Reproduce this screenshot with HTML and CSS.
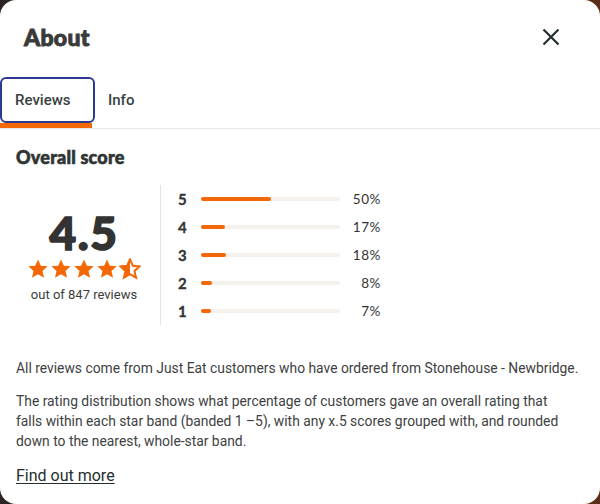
FILE: index.html
```html
<!DOCTYPE html>
<html lang="en">
<head>
<meta charset="utf-8">
<title>About</title>
<link rel="stylesheet" href="styles.css">
</head>
<body>
<div class="modal">
  <header class="header">
    <h1 class="title">About</h1>
    <button class="close" aria-label="Close">
      <svg width="18" height="18" viewBox="0 0 18 18"><path d="M1.5 1.5 L16.5 16.5 M16.5 1.5 L1.5 16.5" stroke="#242e30" stroke-width="2.2" stroke-linecap="butt"/></svg>
    </button>
  </header>
  <nav class="tabs">
    <div class="tab tab-active">Reviews</div>
    <div class="tab tab-info">Info</div>
  </nav>
  <main class="content">
    <h2 class="subtitle">Overall score</h2>
    <section class="score">
      <div class="summary">
        <div class="big">4.5</div>
        <div class="stars">
          <svg class="star" viewBox="0 0 24 24"><path d="M12 1.5l3.1 6.9 7.4.7-5.6 5 1.7 7.4L12 17.6 5.4 21.5l1.7-7.4-5.6-5 7.4-.7z" fill="#f36805"/></svg>
          <svg class="star" viewBox="0 0 24 24"><path d="M12 1.5l3.1 6.9 7.4.7-5.6 5 1.7 7.4L12 17.6 5.4 21.5l1.7-7.4-5.6-5 7.4-.7z" fill="#f36805"/></svg>
          <svg class="star" viewBox="0 0 24 24"><path d="M12 1.5l3.1 6.9 7.4.7-5.6 5 1.7 7.4L12 17.6 5.4 21.5l1.7-7.4-5.6-5 7.4-.7z" fill="#f36805"/></svg>
          <svg class="star" viewBox="0 0 24 24"><path d="M12 1.5l3.1 6.9 7.4.7-5.6 5 1.7 7.4L12 17.6 5.4 21.5l1.7-7.4-5.6-5 7.4-.7z" fill="#f36805"/></svg>
          <svg class="star" viewBox="0 0 24 24"><path d="M12 1.5l3.1 6.9 7.4.7-5.6 5 1.7 7.4L12 17.6 5.4 21.5l1.7-7.4-5.6-5 7.4-.7z" fill="none" stroke="#f36805" stroke-width="2.2" stroke-linejoin="miter"/><path d="M12 1.5 L12 17.6 5.4 21.5l1.7-7.4-5.6-5 7.4-.7z" fill="#f36805"/></svg>
        </div>
        <div class="count">out of 847 reviews</div>
      </div>
      <div class="bars">
        <div class="row"><span class="num">5</span><span class="track"><span class="fill" style="width:50%"></span></span><span class="pct">50%</span></div>
        <div class="row"><span class="num">4</span><span class="track"><span class="fill" style="width:17%"></span></span><span class="pct">17%</span></div>
        <div class="row"><span class="num">3</span><span class="track"><span class="fill" style="width:18%"></span></span><span class="pct">18%</span></div>
        <div class="row"><span class="num">2</span><span class="track"><span class="fill" style="width:8%"></span></span><span class="pct">8%</span></div>
        <div class="row"><span class="num">1</span><span class="track"><span class="fill" style="width:7%"></span></span><span class="pct">7%</span></div>
      </div>
    </section>
    <p class="text first">All reviews come from Just Eat customers who have ordered from Stonehouse - Newbridge.</p>
    <p class="text narrow">The rating distribution shows what percentage of customers gave an overall rating that falls within each star band (banded 1 –5), with any x.5 scores grouped with, and rounded down to the nearest, whole-star band.</p>
    <a class="more" href="#">Find out more</a>
  </main>
</div>
</body>
</html>
```
FILE: styles.css
```css
html, body {
  margin: 0;
  padding: 0;
}
body {
  width: 600px;
  height: 504px;
  background: linear-gradient(90deg, #2a2523 0%, #5a2e18 100%);
  font-family: Roboto, "Liberation Sans", sans-serif;
  color: #242e30;
  overflow: hidden;
}
.modal {
  width: 600px;
  height: 504px;
  background: #fff;
  border-radius: 16px;
  overflow: hidden;
  box-sizing: border-box;
}
.header {
  display: flex;
  align-items: center;
  justify-content: space-between;
  height: 77px;
  padding: 0 40px 4px 24px;
  box-sizing: border-box;
}
.title {
  margin: 0;
  font-family: Lato, sans-serif;
  font-weight: 900;
  font-size: 23px;
  color: #3a3a3a;
  letter-spacing: 0.3px;
  -webkit-text-stroke: 0.9px #3a3a3a;
}
.close {
  background: none;
  border: 0;
  padding: 0;
  width: 18px;
  height: 18px;
  display: flex;
}
.tabs {
  display: flex;
  height: 52px;
  border-bottom: 1px solid #e6e6e6;
  box-sizing: border-box;
}
.tab {
  position: relative;
  font-family: Roboto, sans-serif;
  font-weight: 500;
  font-size: 15px;
  color: #3a3f40;
  line-height: 46px;
  height: 51px;
  box-sizing: border-box;
}
.tab-active {
  width: 95px;
  padding-left: 15px;
}
.tab-active::before {
  content: "";
  position: absolute;
  left: 0;
  top: 0;
  right: 0;
  height: 46px;
  border: 2px solid #2b3990;
  border-radius: 6px;
  box-sizing: border-box;
}
.tab-active::after {
  content: "";
  position: absolute;
  left: 0;
  bottom: 0;
  width: 92px;
  height: 5px;
  background: #f36805;
}
.tab-info {
  padding-left: 13px;
}
.content {
  padding: 17px 16px 0;
}
.subtitle {
  margin: 0;
  font-family: Lato, sans-serif;
  font-weight: 900;
  font-size: 18px;
  line-height: 22px;
  color: #2f3435;
  -webkit-text-stroke: 0.6px #2f3435;
  letter-spacing: 0.2px;
}
.score {
  display: flex;
  align-items: center;
  margin-top: 17px;
}
.summary {
  width: 136px;
  margin-right: 8px;
  display: flex;
  flex-direction: column;
  align-items: center;
  padding-top: 2px;
}
.big {
  font-family: Lato, sans-serif;
  font-weight: 900;
  font-size: 46px;
  line-height: 44px;
  color: #333;
  letter-spacing: 1.5px;
  -webkit-text-stroke: 1.6px #333;
}
.stars {
  display: flex;
  gap: 1px;
  margin-top: 3px;
}
.star {
  width: 22px;
  height: 22px;
}
.count {
  margin-top: 7px;
  font-size: 13px;
  color: #3c3c3c;
}
.bars {
  border-left: 1px solid #e3e3e3;
  padding-left: 17px;
  width: 203px;
}
.row {
  display: flex;
  align-items: center;
  height: 28px;
}
.num {
  width: 23px;
  font-family: Lato, sans-serif;
  font-weight: 700;
  font-size: 15px;
  color: #333;
  -webkit-text-stroke: 0.3px #333;
}
.track {
  width: 139px;
  height: 4px;
  border-radius: 2px;
  background: #f5f1ec;
  display: flex;
}
.fill {
  height: 4px;
  border-radius: 2px;
  background: #f36805;
}
.pct {
  flex: 1;
  text-align: right;
  font-family: Lato, sans-serif;
  font-size: 13.5px;
  color: #333;
  letter-spacing: 0.6px;
}
.text {
  margin: 0 0 13px;
  font-size: 13.85px;
  line-height: 20px;
  color: #3e4142;
}
.text.first {
  margin-top: 33px;
}
.text.narrow {
  max-width: 555px;
}
.more {
  display: inline-block;
  margin-top: 2px;
  font-size: 16px;
  color: #242e30;
  text-decoration: underline;
  text-underline-offset: 2px;
}
```
